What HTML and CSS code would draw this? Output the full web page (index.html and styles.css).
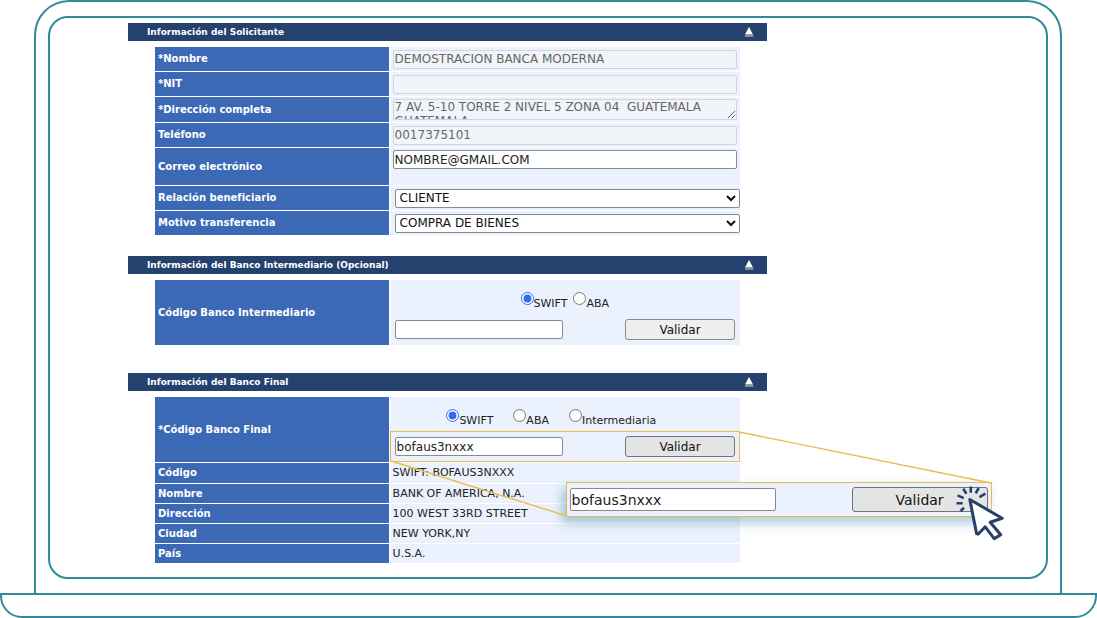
FILE: index.html
```html
<!DOCTYPE html>
<html lang="es">
<head>
<meta charset="utf-8">
<meta name="viewport" content="width=device-width, initial-scale=1">
<title>Transferencia internacional</title>
<link rel="stylesheet" href="styles.css">
</head>
<body>
<main class="laptop">
  <div class="lid">
    <div class="screen">
      <form class="form">
        <section class="section">
          <h2 class="section-head">Información del Solicitante
            <svg class="collapse" viewBox="0 0 10 10" aria-hidden="true"><path d="M5 0 9 7.6H1Z" fill="#fff"/><path d="M1 9H9.4" stroke="#c9c6b4" stroke-width="1.2"/></svg>
          </h2>
          <div class="rows">
            <div class="row"><label class="label" for="nombre">*Nombre</label><div class="value"><input class="text" id="nombre" value="DEMOSTRACION BANCA MODERNA" disabled></div></div>
            <div class="row"><label class="label" for="nit">*NIT</label><div class="value"><input class="text" id="nit" disabled></div></div>
            <div class="row row-area"><label class="label" for="dir">*Dirección completa</label><div class="value"><textarea class="text area" id="dir" disabled>7 AV. 5-10 TORRE 2 NIVEL 5 ZONA 04  GUATEMALA
GUATEMALA</textarea></div></div>
            <div class="row"><label class="label" for="tel">Teléfono</label><div class="value"><input class="text" id="tel" value="0017375101" disabled></div></div>
            <div class="row row-mail"><label class="label" for="mail">Correo electrónico</label><div class="value"><input class="text" id="mail" value="NOMBRE@GMAIL.COM"></div></div>
            <div class="row"><label class="label" for="rel">Relación beneficiario</label><div class="value value-select"><select class="select" id="rel"><option>CLIENTE</option></select></div></div>
            <div class="row"><label class="label" for="motivo">Motivo transferencia</label><div class="value value-select"><select class="select" id="motivo"><option>COMPRA DE BIENES</option></select></div></div>
          </div>
        </section>

        <section class="section">
          <h2 class="section-head">Información del Banco Intermediario (Opcional)
            <svg class="collapse" viewBox="0 0 10 10" aria-hidden="true"><path d="M5 0 9 7.6H1Z" fill="#fff"/><path d="M1 9H9.4" stroke="#c9c6b4" stroke-width="1.2"/></svg>
          </h2>
          <div class="rows">
            <div class="row row-bank"><label class="label" for="inter">Código Banco Intermediario</label>
              <div class="value value-bank">
                <div class="radios">
                  <label class="radio"><input type="radio" name="inter" checked>SWIFT</label>
                  <label class="radio"><input type="radio" name="inter">ABA</label>
                </div>
                <div class="code-line"><input class="text code" id="inter"><button class="button" type="button">Validar</button></div>
              </div>
            </div>
          </div>
        </section>

        <section class="section">
          <h2 class="section-head">Información del Banco Final
            <svg class="collapse" viewBox="0 0 10 10" aria-hidden="true"><path d="M5 0 9 7.6H1Z" fill="#fff"/><path d="M1 9H9.4" stroke="#c9c6b4" stroke-width="1.2"/></svg>
          </h2>
          <div class="rows">
            <div class="row row-bank"><label class="label" for="final">*Código Banco Final</label>
              <div class="value value-bank">
                <div class="radios radios-wide">
                  <label class="radio"><input type="radio" name="final" checked>SWIFT</label>
                  <label class="radio"><input type="radio" name="final">ABA</label>
                  <label class="radio"><input type="radio" name="final">Intermediaria</label>
                </div>
                <div class="code-line highlight">
                  <input class="text code" id="final" value="bofaus3nxxx"><button class="button button-active" type="button">Validar</button>
                  <div class="callout">
                    <input class="text callout-code" value="bofaus3nxxx" aria-label="Código ampliado"><button class="button button-active callout-button" type="button">Validar</button>
                    <svg class="cursor" viewBox="0 0 80 80" aria-hidden="true">
                      <path d="M29.8 29.5 62.2 48.3 50.2 52.2 60.7 64.7 54.2 68.6 45.2 56.8 38 64.2 36.6 63.6Z" fill="#fff" stroke="#27406b" stroke-width="3" stroke-linejoin="round"/>
                      <path d="M20.6 41 24 37.8M16.5 33.2H22.7M17.6 25.3 23.7 28.2M23.2 18.8 26.4 23.7M30.8 16.4V22.7M38.7 18 35.7 23.3M45.4 23.7 39.4 27.2" fill="none" stroke="#27406b" stroke-width="2.6"/>
                    </svg>
                  </div>
                  <svg class="leaders" width="602" height="88" viewBox="0 0 602 88" aria-hidden="true"><path d="M1 30 177 85M349 1 601 52" fill="none" stroke="#e9bd4b" stroke-width="1.4"/></svg>
                </div>
              </div>
            </div>
            <dl class="details">
              <div class="row row-slim row-first"><dt class="label">Código</dt><dd class="value">SWIFT: BOFAUS3NXXX</dd></div>
              <div class="row row-slim"><dt class="label">Nombre</dt><dd class="value">BANK OF AMERICA, N.A.</dd></div>
              <div class="row row-slim"><dt class="label">Dirección</dt><dd class="value">100 WEST 33RD STREET</dd></div>
              <div class="row row-slim"><dt class="label">Ciudad</dt><dd class="value">NEW YORK,NY</dd></div>
              <div class="row row-slim"><dt class="label">País</dt><dd class="value">U.S.A.</dd></div>
            </dl>
          </div>
        </section>
      </form>
    </div>
  </div>
  <div class="base"></div>
</main>
</body>
</html>
```
FILE: styles.css
```css
:root {
  --teal: #2f8a9c;
  --navy: #25416d;
  --blue: #3b69b5;
  --pale: #ebf2fe;
  --gold: #e9bd4b;
}

* { box-sizing: border-box; }

body {
  margin: 0;
  background: #fff;
  color: #222;
  font: 11px/14px "DejaVu Sans", Verdana, sans-serif;
}

.laptop { display: flex; flex-direction: column; min-height: 100vh; }

.lid {
  flex: 1;
  display: flex;
  margin: 0 35px 0 34px;
  padding: 14px 12px;
  border: solid var(--teal);
  border-width: 2px 2px 0;
  border-radius: 35px 35px 0 0;
}

.screen {
  flex: 1;
  padding: 5px 78px 12px;
  border: 2px solid var(--teal);
  border-radius: 20px;
}

.base {
  height: 25px;
  border: 2px solid var(--teal);
  border-radius: 0 0 22px 22px;
}

.form { max-width: 639px; }

.section { margin-bottom: 20px; }
.section:nth-child(2) { margin-bottom: 27px; }
.section:last-child { margin-bottom: 0; }

.section-head {
  display: flex;
  align-items: center;
  justify-content: space-between;
  height: 18px;
  margin: 0 0 6px;
  padding: 0 13px 0 19px;
  background: var(--navy);
  color: #fff;
  font-size: 9px;
  line-height: 12px;
}

.collapse { width: 10px; height: 10px; }

.rows { margin: 0 27px; }
.details { margin: 0; }

.row {
  display: grid;
  grid-template-columns: 2fr 3fr;
  gap: 1px;
  min-height: 25px;
  border-bottom: 1px solid #fff;
}
.row-area { min-height: 26px; }
.row-mail { min-height: 38px; }
.row-bank { min-height: 66px; }
.row-slim { min-height: 20px; }
.row-first { min-height: 21px; }

.label {
  display: flex;
  align-items: center;
  padding-left: 3px;
  background: var(--blue);
  color: #fff;
  font-size: 10px;
  font-weight: bold;
}

.value {
  display: flex;
  align-items: center;
  margin: 0;
  padding: 0 3px;
  background: var(--pale);
}
.row-mail .value { align-items: flex-start; padding-top: 2px; }
.value-select { padding: 0 0 0 5px; }
.value-bank { flex-direction: column; align-items: stretch; padding: 0; }

.text {
  width: 100%;
  height: 19px;
  margin: 0;
  padding: 0 1px;
  border: 1px solid #858a93;
  border-radius: 2px;
  background: #fff;
  color: #222;
  font: 12px/16px "DejaVu Sans", Verdana, sans-serif;
}
.text:disabled { border-color: #d0d4dc; background: #f1f4f8; color: #666; }
.area { display: block; height: 21px; overflow: hidden; line-height: 14px; white-space: pre-wrap; resize: vertical; }

.select {
  width: 100%;
  height: 19px;
  padding: 0;
  border: 1px solid #858a93;
  border-radius: 2px;
  background: #fff;
  color: #111;
  font: 12px/16px "DejaVu Sans", Verdana, sans-serif;
}

.radios {
  display: flex;
  justify-content: center;
  gap: 6px;
  height: 34px;
  padding-top: 12px;
}
.radios-wide { gap: 20px; padding-right: 27px; }

.radio { display: flex; align-items: flex-end; height: 19px; }
.radio input { width: 13px; height: 13px; margin: 0 0 6px; accent-color: #2f6df0; }

.code-line {
  display: flex;
  align-items: center;
  justify-content: space-between;
  height: 31px;
  padding: 0 5px;
}
.code { width: 168px; }

.button {
  width: 110px;
  height: 21px;
  padding: 0;
  border: 1px solid #858a93;
  border-radius: 3px;
  background: #efefef;
  color: #111;
  font: 12px/16px "DejaVu Sans", Verdana, sans-serif;
}
.button-active { background: #e4e4e4; border-color: #6f747c; }

.highlight { position: relative; border: 1px solid var(--gold); padding: 0 4px; }

.leaders { position: absolute; top: -1px; left: -1px; pointer-events: none; }

.callout {
  position: absolute;
  top: 50px;
  left: 175px;
  display: flex;
  align-items: center;
  justify-content: space-between;
  width: 426px;
  height: 35px;
  padding: 0 3px;
  border: 1px solid var(--gold);
  background: var(--pale);
  box-shadow: -4px 6px 10px rgba(70, 140, 170, 0.45);
}
.callout-code { width: 206px; height: 23px; font-size: 14px; }
.callout-button { width: 136px; height: 25px; font-size: 14px; }

.cursor { position: absolute; top: -13px; left: 373px; width: 80px; height: 80px; pointer-events: none; }
```
